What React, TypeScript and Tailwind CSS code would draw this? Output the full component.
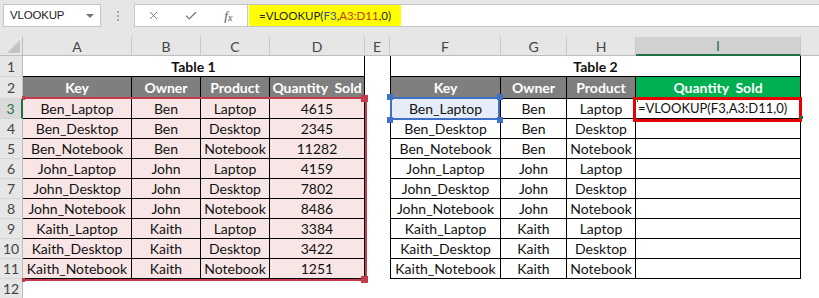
import { X, Check } from "lucide-react";

const DATA = [
  ["Ben_Laptop", "Ben", "Laptop", "4615"],
  ["Ben_Desktop", "Ben", "Desktop", "2345"],
  ["Ben_Notebook", "Ben", "Notebook", "11282"],
  ["John_Laptop", "John", "Laptop", "4159"],
  ["John_Desktop", "John", "Desktop", "7802"],
  ["John_Notebook", "John", "Notebook", "8486"],
  ["Kaith_Laptop", "Kaith", "Laptop", "3384"],
  ["Kaith_Desktop", "Kaith", "Desktop", "3422"],
  ["Kaith_Notebook", "Kaith", "Notebook", "1251"],
];

const LETTERS = ["A", "B", "C", "D", "E", "F", "G", "H", "I"];

const rowHead = "flex items-center justify-center bg-[#e6e6e6] border-r border-b border-r-[#bdbdbd] border-b-[#d6d6d6] text-[#444] text-[14px]";
const colHead = "flex items-center justify-center bg-[#e6e6e6] border-r border-b border-r-[#c8c8c8] border-b-[#bdbdbd] text-[#444] text-[14px]";
const cell = "flex items-center justify-center border-r border-b border-black whitespace-nowrap overflow-visible";
const head = "flex items-center justify-center border-r border-b border-black whitespace-pre text-white font-bold text-[14px]";

function FormulaBar() {
  return (
    <div className="h-[37px] bg-[#e6e6e6] flex items-start pt-[4px] font-['Liberation_Sans',sans-serif]">
      <div className="ml-[3px] w-[98px] h-[23px] bg-white border border-[#c6c6c6] flex items-center justify-between pl-[6px] pr-[6px]">
        <span className="text-[11.5px] text-[#222] tracking-[-0.2px]">VLOOKUP</span>
        <span className="w-0 h-0 border-l-[4px] border-r-[4px] border-t-[4px] border-l-transparent border-r-transparent border-t-[#777]" />
      </div>
      <div className="w-[33px] h-[23px] flex flex-col items-center justify-center gap-[2px]">
        <span className="w-[2px] h-[2px] bg-[#aaa]" />
        <span className="w-[2px] h-[2px] bg-[#aaa]" />
        <span className="w-[2px] h-[2px] bg-[#aaa]" />
      </div>
      <div className="w-[114px] h-[23px] bg-white border border-[#c6c6c6] flex items-center">
        <div className="w-[38px] flex justify-center">
          <X size={13} strokeWidth={1.6} color="#6e6e6e" />
        </div>
        <div className="w-[38px] flex justify-center">
          <Check size={14} strokeWidth={2} color="#6e6e6e" />
        </div>
        <div className="w-[38px] flex justify-center items-center font-['Liberation_Serif',serif] italic text-[#555] text-[13px]">
          f<span className="text-[10px] mt-[3px]">x</span>
        </div>
      </div>
      <div className="flex-1 h-[23px] bg-white border-t border-b border-[#c6c6c6] flex items-center pl-px">
        <div className="h-[21px] w-[152px] bg-[#ffff00] flex items-center pl-[10px] font-['Lato',sans-serif] text-[11.5px] text-[#222] whitespace-nowrap">
          =VLOOKUP(<span className="text-[#2f55a0]">F3</span>,<span className="text-[#c0392b]">A3:D11</span>,0)
        </div>
      </div>
    </div>
  );
}

export default function App() {
  return (
    <div className="w-[819px] h-[298px] overflow-hidden bg-white relative font-['Lato',sans-serif] text-[14px] text-[#111]">
      <FormulaBar />
      <div className="grid grid-cols-[23px_109px_69px_69px_95px_25px_111px_66px_69px_165px_1fr] grid-rows-[19px_21px_22px_repeat(10,20px)]">
        {/* column headers */}
        <div className="bg-[#e6e6e6] border-r border-b border-[#bdbdbd] flex items-end justify-end pr-[2px] pb-[2px]">
          <svg width="13" height="13" viewBox="0 0 13 13">
            <polygon points="13,0 13,13 0,13" fill="#c4c4c4" />
          </svg>
        </div>
        {LETTERS.map((l) =>
          l === "I" ? (
            <div key={l} className="flex items-center justify-center bg-[#d2d2d2] border-r border-r-[#c8c8c8] border-b-2 border-b-[#217346] text-[#217346] text-[14px]">
              {l}
            </div>
          ) : (
            <div key={l} className={colHead}>{l}</div>
          )
        )}
        <div className="bg-[#e6e6e6] border-b border-[#bdbdbd]" />

        {/* row 1 */}
        <div className={rowHead}>1</div>
        <div className="col-span-4 flex items-center justify-center border-r border-b border-black font-bold">Table 1</div>
        <div />
        <div className="col-span-4 flex items-center justify-center border-l border-r border-b border-black font-bold">Table 2</div>
        <div />

        {/* row 2 */}
        <div className={rowHead}>2</div>
        <div className={`${head} bg-[#7f7f7f]`}>Key</div>
        <div className={`${head} bg-[#7f7f7f]`}>Owner</div>
        <div className={`${head} bg-[#7f7f7f]`}>Product</div>
        <div className={`${head} bg-[#7f7f7f] text-[13.5px]`}>Quantity  Sold</div>
        <div />
        <div className={`${head} bg-[#7f7f7f] border-l`}>Key</div>
        <div className={`${head} bg-[#7f7f7f]`}>Owner</div>
        <div className={`${head} bg-[#7f7f7f]`}>Product</div>
        <div className={`${head} bg-[#00b050]`}>Quantity  Sold</div>
        <div />

        {/* rows 3-11 */}
        {DATA.map((r, i) => (
          <div key={r[0]} className="contents">
            <div
              className={
                i === 0
                  ? "flex items-center justify-center bg-[#dadada] border-r-2 border-b border-r-[#217346] border-b-[#d6d6d6] text-[#217346] text-[14px]"
                  : rowHead
              }
            >
              {i + 3}
            </div>
            <div className={`${cell} bg-[#f8e6e6]`}>{r[0]}</div>
            <div className={`${cell} bg-[#f8e6e6]`}>{r[1]}</div>
            <div className={`${cell} bg-[#f8e6e6]`}>{r[2]}</div>
            <div className={`${cell} bg-[#f8e6e6]`}>{r[3]}</div>
            <div />
            <div className={`${cell} border-l ${i === 0 ? "bg-[#e6edf8]" : ""}`}>{r[0]}</div>
            <div className={cell}>{r[1]}</div>
            <div className={cell}>{r[2]}</div>
            <div className={`${cell} justify-start pl-[2px] text-[13px]`}>{i === 0 ? "=VLOOKUP(F3,A3:D11,0)" : ""}</div>
            <div />
          </div>
        ))}

        {/* row 12 */}
        <div className={rowHead}>12</div>
        <div className="col-span-10" />
      </div>

      {/* reference range A3:D11 */}
      <div className="absolute left-[22px] top-[97px] w-[345px] h-[184px] border-t-2 border-r-2 border-b-2 border-[#c43b4e] pointer-events-none" />
      <div className="absolute left-[361px] top-[95px] w-[7px] h-[7px] bg-[#c43b4e]" />
      <div className="absolute left-[361px] top-[276px] w-[7px] h-[7px] bg-[#c43b4e]" />
      <div className="absolute left-[22px] top-[96px] w-[3px] h-[4px] bg-[#c43b4e]" />
      <div className="absolute left-[22px] top-[278px] w-[3px] h-[4px] bg-[#c43b4e]" />

      {/* reference F3 */}
      <div className="absolute left-[390px] top-[97px] w-[110px] h-[23px] border-2 border-[#3f6fc6] pointer-events-none" />
      <div className="absolute left-[387px] top-[94px] w-[6px] h-[6px] bg-[#3f6fc6]" />
      <div className="absolute left-[497px] top-[94px] w-[6px] h-[6px] bg-[#3f6fc6]" />
      <div className="absolute left-[387px] top-[117px] w-[6px] h-[6px] bg-[#3f6fc6]" />
      <div className="absolute left-[497px] top-[117px] w-[6px] h-[6px] bg-[#3f6fc6]" />

      {/* editing cell I3 */}
      <div className="absolute left-[633px] top-[97px] w-[169px] h-[25px] border-[3px] border-[#e60000] pointer-events-none" />
      <div className="absolute left-[637px] top-[99px] w-px h-[3px] bg-[#217346]" />
      <div className="absolute left-[800px] top-[116px] w-[3px] h-[3px] bg-[#217346]" />
    </div>
  );
}
